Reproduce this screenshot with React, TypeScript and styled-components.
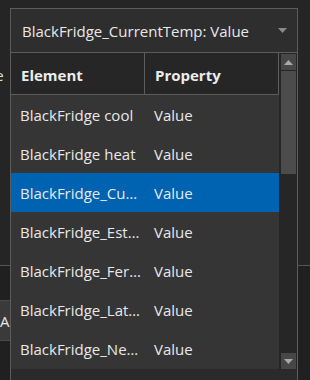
import React from 'react';
import styled, { createGlobalStyle } from 'styled-components';

const GlobalStyle = createGlobalStyle`
  html, body {
    margin: 0;
    padding: 0;
    background: #212121;
  }
  body {
    font-family: 'Open Sans', 'Noto Sans', sans-serif;
    color: #e6e6e6;
  }
`;

const Page = styled.div`
  position: relative;
  width: 310px;
  height: 380px;
  overflow: hidden;
  display: flex;
  flex-direction: column;
`;

const UpperPane = styled.div`
  height: 266px;
  background: #252525;
  border-bottom: 1px solid #555;
  box-sizing: border-box;
  padding-top: 65px;
`;

const CutLabel = styled.div`
  margin-left: -35px;
  font-size: 15px;
  color: #dcdcdc;
`;

const LowerPane = styled.div`
  flex: 1;
  background: #202020;
  padding-top: 34px;
`;

const HiddenButton = styled.div`
  width: 60px;
  height: 41px;
  margin-left: -49px;
  background: #3a3a3a;
  border: 1px solid #4a4a4a;
  box-sizing: border-box;
  display: flex;
  align-items: center;
  padding-left: 48px;
  font-size: 15px;
  color: #e6e6e6;
`;

const Popup = styled.div`
  position: absolute;
  left: 10px;
  top: 8px;
  width: 288px;
  height: 380px;
  box-sizing: border-box;
  border: 1px solid #5c5c5c;
  background: #2a2a2a;
  display: flex;
  flex-direction: column;
`;

const Combo = styled.div`
  height: 43px;
  flex: none;
  display: flex;
  align-items: center;
  justify-content: space-between;
  padding: 0 10px 0 11px;
  background: #2e2e2e;
  border-bottom: 1px solid #5c5c5c;
  font-size: 15px;
  color: #e8e8e8;
`;

const ListArea = styled.div`
  display: flex;
  height: 316px;
  flex: none;
`;

const Table = styled.div`
  flex: 1;
  display: flex;
  flex-direction: column;
  background: #333;
`;

const Row = styled.div<{ $selected?: boolean }>`
  display: grid;
  grid-template-columns: 134px 134px;
  height: 39px;
  align-items: center;
  background: ${(p) => (p.$selected ? '#0063b1' : '#353535')};
  font-size: 15px;
  color: #e8e8e8;
`;

const HeadRow = styled.div`
  display: grid;
  grid-template-columns: 134px 134px;
  height: 41px;
  background: #262626;
  border-bottom: 1px solid #5c5c5c;
`;

const HeadCell = styled.div`
  display: flex;
  align-items: center;
  padding: 2px 0 0 10px;
  border-right: 1px solid #5c5c5c;
  font-weight: 700;
  font-size: 15px;
  color: #ececec;
`;

const Cell = styled.div`
  padding: 1px 4px 0 9px;
  white-space: nowrap;
`;

const Scrollbar = styled.div`
  width: 18px;
  flex: none;
  background: #262626;
  display: flex;
  flex-direction: column;
  padding: 1px 1px 0 2px;
  box-sizing: border-box;
`;

const ScrollButton = styled.div`
  height: 16px;
  background: #474747;
  display: flex;
  align-items: center;
  justify-content: center;
  flex: none;
`;

const Thumb = styled.div`
  height: 103px;
  margin-top: 1px;
  background: #4c4c4c;
`;

const Track = styled.div`
  flex: 1;
`;

const Arrow = ({ up, color = '#a9a9a9' }: { up?: boolean; color?: string }) => (
  <svg width="9" height="5" viewBox="0 0 9 5">
    <path d={up ? 'M0 5 L4.5 0 L9 5 Z' : 'M0 0 L9 0 L4.5 5 Z'} fill={color} />
  </svg>
);

const rows = [
  'BlackFridge cool',
  'BlackFridge heat',
  'BlackFridge_Cu…',
  'BlackFridge_Est…',
  'BlackFridge_Fer…',
  'BlackFridge_Lat…',
  'BlackFridge_Ne…',
];

export default function App() {
  return (
    <>
      <GlobalStyle />
      <Page>
        <UpperPane>
          <CutLabel>Value</CutLabel>
        </UpperPane>
        <LowerPane>
          <HiddenButton>A</HiddenButton>
        </LowerPane>
        <Popup>
          <Combo>
            <span>BlackFridge_CurrentTemp: Value</span>
            <Arrow color="#8a8a8a" />
          </Combo>
          <ListArea>
            <Table>
              <HeadRow>
                <HeadCell>Element</HeadCell>
                <HeadCell>Property</HeadCell>
              </HeadRow>
              {rows.map((name, i) => (
                <Row key={name} $selected={i === 2}>
                  <Cell>{name}</Cell>
                  <Cell>Value</Cell>
                </Row>
              ))}
            </Table>
            <Scrollbar>
              <ScrollButton>
                <Arrow up />
              </ScrollButton>
              <Thumb />
              <Track />
              <ScrollButton>
                <Arrow />
              </ScrollButton>
            </Scrollbar>
          </ListArea>
        </Popup>
      </Page>
    </>
  );
}
